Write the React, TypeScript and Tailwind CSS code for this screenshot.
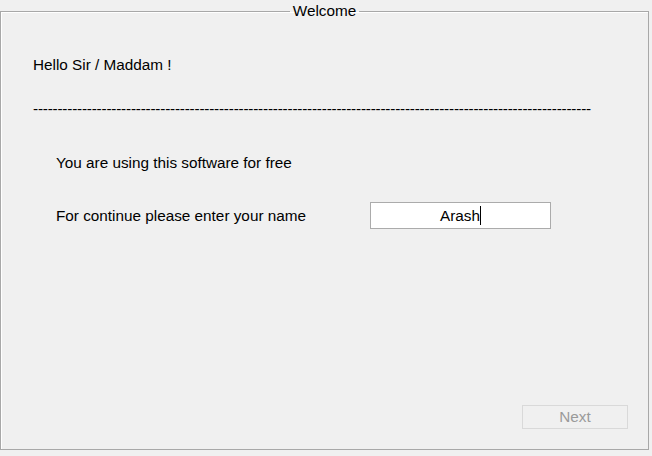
export default function App() {
  const dashes = "-".repeat(114);

  return (
    <div
      className="w-[652px] h-[456px] bg-[#f0f0f0] pt-[2px] overflow-hidden text-[#000] text-[15.3px]"
      style={{ fontFamily: '"Liberation Sans", Arial, sans-serif' }}
    >
      <fieldset className="w-[649px] h-[448px] border border-[#a8a8a8] shadow-[inset_1px_1px_0_#ffffff]">
        <legend className="mx-auto px-[3px] leading-[18px]">Welcome</legend>

        <div className="flex flex-col pl-[32px] pr-[56px] h-[430px]">
          <p className="mt-[36px] leading-[18px]">Hello Sir / Maddam !</p>

          <div className="mt-[26px] whitespace-nowrap leading-[18px] tracking-[-0.2px]">
            {dashes}
          </div>

          <div className="pl-[23px] mt-[36px] flex flex-col">
            <p className="leading-[18px]">You are using this software for free</p>

            <div className="mt-[30px] flex items-center">
              <span className="w-[314px] leading-[18px]">For continue please enter your name</span>
              <div className="w-[181px] h-[27px] bg-white border border-[#ababab] flex items-center justify-center">
                <span className="leading-[18px]">Arash</span>
                <span className="w-px h-[19px] bg-black" />
              </div>
            </div>
          </div>

          <div className="mt-auto mb-[21px] flex justify-end">
            <button
              disabled
              className="mr-[-36px] w-[106px] h-[24px] border border-[#d9d9d9] bg-[#f0f0f0] text-[#9a9a9a] leading-[18px]"
            >
              Next
            </button>
          </div>
        </div>
      </fieldset>
    </div>
  );
}
